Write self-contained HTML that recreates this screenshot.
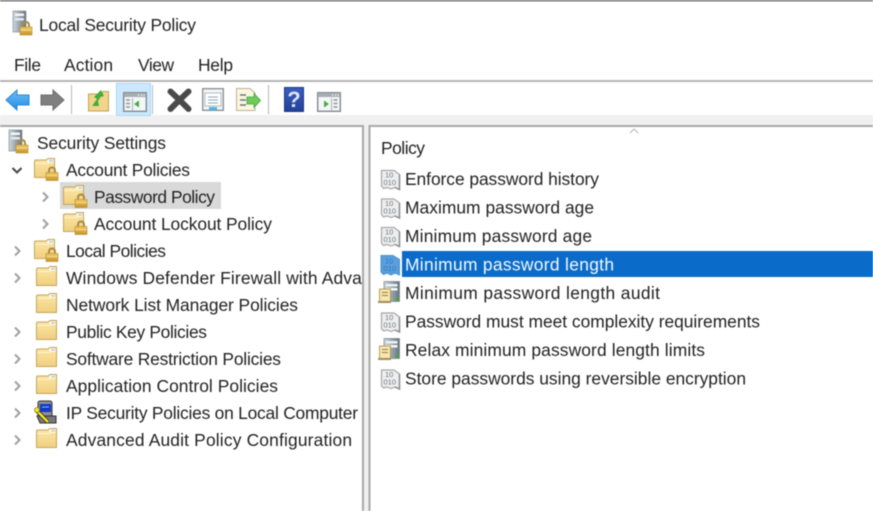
<!DOCTYPE html>
<html lang="en"><head><meta charset="utf-8"><title>Local Security Policy</title>
<style>
html,body{margin:0;padding:0;width:873px;height:511px;overflow:hidden;background:#fff}
svg{display:block;filter:blur(.4px)}
text{font-family:"Liberation Sans",sans-serif;font-size:17.4px;fill:#222}
</style></head><body>
<svg xmlns="http://www.w3.org/2000/svg" width="873" height="511" viewBox="0 0 873 511">
<defs>
<linearGradient id="fg" x1="0" y1="0" x2="0" y2="1"><stop offset="0" stop-color="#fbe7a8"/><stop offset="1" stop-color="#f1cf7e"/></linearGradient>
<linearGradient id="lg" x1="0" y1="0" x2="0" y2="1"><stop offset="0" stop-color="#f0cb62"/><stop offset="1" stop-color="#c8922a"/></linearGradient>
<linearGradient id="tg" x1="0" y1="0" x2="1" y2="0"><stop offset="0" stop-color="#cdd6dc"/><stop offset="1" stop-color="#66747f"/></linearGradient>
<linearGradient id="bg" x1="0" y1="0" x2="0" y2="1"><stop offset="0" stop-color="#6fbdf5"/><stop offset="1" stop-color="#1f8fe6"/></linearGradient>
<linearGradient id="hg" x1="0" y1="0" x2="0" y2="1"><stop offset="0" stop-color="#3a5fc0"/><stop offset="1" stop-color="#22409a"/></linearGradient>
<clipPath id="lp"><rect x="0" y="127" width="362" height="384"/></clipPath>

<g id="folder">
<path d="M.5 3.500Q.5 2 2 2H12L14 .5H20.500V19.500H.5Z" fill="url(#fg)" stroke="#c4a35c"/>
<rect x="13.500" y="1.500" width="6" height="3" fill="#fff"/>
<rect x="15" y="2.200" width="4" height="1.400" fill="#a9c8de"/>
<path d="M1 5.500H13.500L15 4.500H20" fill="none" stroke="#fff3cc"/>
</g>
<g id="lock">
<path d="M3 6.500V4Q3 .5 6 .5T9 4V6.500" fill="none" stroke="#a98a45" stroke-width="2"/>
<rect x="0" y="5.500" width="12" height="8" fill="url(#lg)" stroke="#b88a2c" stroke-width=".6"/>
<rect x=".5" y="8" width="11" height="1.200" fill="#f5db88"/>
</g>
<g id="lf"><use href="#folder"/><use href="#lock" x="12" y="9"/></g>
<g id="ch"><path d="M0 0L4.500 4.500 0 9" fill="none" stroke="#a0a0a0" stroke-width="2"/></g>
<g id="tower">
<rect x="0" y="0" width="13" height="21" fill="url(#tg)" stroke="#7c8790" stroke-width=".6"/>
<rect x="2" y="2.500" width="9" height="2.500" fill="#f4f6f7"/>
<rect x="2" y="7" width="9" height="2.500" fill="#e3e8ec"/>
</g>
<g id="bin">
<path d="M.5 1.500H13L18.500 5.500V20.500L14 18.500 10 20 6 18.500 2.500 19.500 .5 17Z" fill="#eeeeee" stroke="#a6a6a6" stroke-width="1.200"/>
<path d="M14 18.500 18.500 20.500V5.500" fill="none" stroke="#8a8a8a" stroke-width="1.400"/>
<text x="4" y="8.500" style="font-size:7.500px;fill:#6f7882">10</text>
<text x="2.500" y="16" style="font-size:7.500px;fill:#6f7882">010</text>
</g>
<g id="srv">
<rect x="6" y="0.500" width="15.500" height="20" fill="url(#tg)" stroke="#66737c" stroke-width=".6"/>
<rect x="8" y="3" width="11.500" height="2.500" fill="#eef2f4"/>
<rect x="8" y="7" width="11.500" height="2.500" fill="#f6f8f9"/>
<circle cx="19.500" cy="18" r="1.600" fill="#40b030"/>
<rect x="1.500" y="8" width="11" height="12.500" fill="#f8e6ab" stroke="#a48a4e" stroke-width=".8"/>
<path d="M4 11.500H10M4 14.500H10" stroke="#8d7a4c"/>
<rect x="0" y="20" width="13" height="2" fill="#a38c58"/>
</g>
<g id="win">
<rect x=".7" y=".7" width="22.600" height="18.600" fill="#f5f6f6" stroke="#7f8890" stroke-width="1.400"/>
<rect x="1" y="1" width="22" height="4" fill="#a6adb3"/>
<path d="M15 3H16M18 3H19M20.500 3H21.500" stroke="#fff" stroke-width="1.400"/>
</g>
</defs>

<rect x="0" y="0" width="873" height="1.500" fill="#777"/>

<!-- title -->
<use href="#tower" x="13" y="11"/>
<use href="#lock" x="20" y="21.500"/>
<text x="39" y="31" textLength="157">Local Security Policy</text>

<!-- menu -->
<text x="14" y="71" textLength="27">File</text>
<text x="64" y="71" textLength="49">Action</text>
<text x="138" y="71" textLength="36">View</text>
<text x="198" y="71" textLength="35">Help</text>
<rect x="0" y="80" width="873" height="2" fill="#b4b4b4"/>

<!-- toolbar -->
<rect x="0" y="115" width="873" height="12" fill="#f0f0f0"/>
<rect x="116.500" y="83.500" width="34" height="32" fill="#cce8ff" stroke="#a9d8fb"/>
<path d="M71.500 85V114M152.500 85V114M268.500 85V114" stroke="#b5b5b5"/>
<path d="M6 100L17 90V95H29V105H17V110Z" fill="url(#bg)" stroke="#2b86d0"/>
<path d="M64 100L53 90V95H41V105H53V110Z" fill="#808080" stroke="#6e6e6e"/>
<path d="M88.500 94H100L103 91.500H108.500V111H88.500Z" fill="#f2d58a" stroke="#c2a25c"/>
<path d="M92 106L97 99 94 97 101 90 104 96 100.500 97 98 101 99 106Z" fill="#43ac3c"/>
<g transform="translate(123,92)"><use href="#win"/>
<path d="M3 8H7M3 11.500H7M3 15H7" stroke="#8d959c" stroke-width="1.600"/>
<path d="M16 8.500V15.500L11 12Z" fill="#3fb04a"/>
<path d="M9.500 6V19" stroke="#aab0b5"/>
</g>
<path d="M170.500 91.500L179.500 100M188.500 91.500L179.500 100M170.500 109L179.500 100M188.500 109L179.500 100" stroke="#4a4a4a" stroke-width="6" stroke-linecap="round"/>
<g>
<rect x="202.700" y="88.700" width="20.600" height="21.600" fill="#f3f5f6" stroke="#8a9298" stroke-width="1.400"/>
<rect x="205" y="93" width="16" height="13" fill="#fff" stroke="#b5bbc0"/>
<path d="M208 97H218M208 100H218M208 103H218" stroke="#8ea5ba"/>
<rect x="209" y="107" width="8" height="3" fill="#56b2e8"/>
</g>
<g>
<path d="M236.500 88.500H250L255 93V110.500H236.500Z" fill="#fbf7df" stroke="#b7b19a"/>
<path d="M240 95H246M240 100H246M240 105H246" stroke="#6a7480" stroke-width="1.400"/>
<path d="M247 97H254V93.500L260.500 100.500 254 107.500V104H247Z" fill="#6fcb58" stroke="#3ea53a" stroke-width=".8"/>
</g>
<rect x="284.500" y="87.500" width="19" height="24" fill="url(#hg)" stroke="#1d347f"/>
<text x="294" y="107" text-anchor="middle" style="font-size:22px;font-weight:bold;fill:#dfe5f5">?</text>
<g transform="translate(317,92)"><use href="#win"/>
<path d="M7 8.500V15.500L12 12Z" fill="#3fb04a"/>
<path d="M14.500 6V19" stroke="#aab0b5"/>
<path d="M16.500 8H20.500M16.500 11.500H20.500M16.500 15H20.500" stroke="#8d959c" stroke-width="1.600"/>
</g>

<!-- pane frame -->
<rect x="0" y="125" width="362" height="2" fill="#a8a8a8"/>
<rect x="362" y="125" width="2" height="386" fill="#a8a8a8"/>
<rect x="364" y="127" width="4.500" height="384" fill="#f0f0f0"/>
<rect x="368.500" y="125" width="2" height="386" fill="#a8a8a8"/>
<rect x="370" y="125" width="503" height="2" fill="#a8a8a8"/>
<rect x="0" y="127" width="362" height="384" fill="#fff"/>
<rect x="370.500" y="127" width="502.500" height="384" fill="#fff"/>

<!-- tree -->
<use href="#tower" x="9" y="130"/>
<use href="#lock" x="16" y="139.500"/>
<text x="37" y="149" textLength="129">Security Settings</text>

<rect x="60" y="182" width="161" height="27" fill="#d9d9d9"/>

<path d="M12.500 168L17 172.500 21.500 168" fill="none" stroke="#444" stroke-width="2"/>
<use href="#lf" x="34" y="158"/>
<text x="66" y="176" textLength="124">Account Policies</text>

<use href="#ch" x="43" y="192.500"/>
<use href="#lf" x="63" y="185"/>
<text x="94" y="203" textLength="121">Password Policy</text>

<use href="#ch" x="43" y="219.500"/>
<use href="#lf" x="63" y="212"/>
<text x="94" y="230" textLength="178">Account Lockout Policy</text>

<use href="#ch" x="15" y="246.500"/>
<use href="#lf" x="34" y="239"/>
<text x="66" y="257" textLength="100">Local Policies</text>

<use href="#ch" x="15" y="273.500"/>
<use href="#folder" x="36" y="266"/>
<g clip-path="url(#lp)"><text x="66" y="284" textLength="403">Windows Defender Firewall with Advanced Security</text></g>

<use href="#folder" x="36" y="293"/>
<text x="66" y="311" textLength="232">Network List Manager Policies</text>

<use href="#ch" x="15" y="327.500"/>
<use href="#folder" x="36" y="320"/>
<text x="66" y="338" textLength="141">Public Key Policies</text>

<use href="#ch" x="15" y="354.500"/>
<use href="#folder" x="36" y="347"/>
<text x="66" y="365" textLength="215">Software Restriction Policies</text>

<use href="#ch" x="15" y="381.500"/>
<use href="#folder" x="36" y="374"/>
<text x="66" y="392" textLength="212">Application Control Policies</text>

<use href="#ch" x="15" y="408.500"/>
<g>
<rect x="38" y="401" width="14" height="16" rx="2" fill="#8d8f92" stroke="#333"/>
<rect x="40" y="404" width="11" height="8" fill="#1438c8"/>
<path d="M42 407H49" stroke="#5ed0f0"/>
<path d="M37 416H56V423H40Z" fill="#77797c" stroke="#333"/>
<path d="M36 410L48 422" stroke="#222" stroke-width="4"/>
<path d="M36 410L48 422" stroke="#f6e71c" stroke-width="2.500"/>
<circle cx="37" cy="410" r="2.500" fill="#f6e71c" stroke="#6b6310" stroke-width=".6"/>
</g>
<text x="66" y="419" textLength="292">IP Security Policies on Local Computer</text>

<use href="#ch" x="15" y="435.500"/>
<use href="#folder" x="36" y="428"/>
<text x="66" y="446" textLength="286">Advanced Audit Policy Configuration</text>

<!-- list -->
<path d="M630 133L634 129 638 133" fill="none" stroke="#b5b5b5"/>
<text x="381" y="154" textLength="44">Policy</text>

<use href="#bin" x="381" y="169"/>
<text x="405" y="185" textLength="194">Enforce password history</text>
<use href="#bin" x="381" y="197.500"/>
<text x="405" y="213.500" textLength="189">Maximum password age</text>
<use href="#bin" x="381" y="226"/>
<text x="405" y="242" textLength="187">Minimum password age</text>

<path d="M381 255.500H393L399.500 259.500V275L395 273 391 275 387 273 383.500 274.500 381 272Z" fill="#5a9fdc" stroke="#4a8fd0"/>
<text x="385" y="263.500" style="font-size:7.500px;fill:#2f78c0">10</text>
<text x="383.500" y="271" style="font-size:7.500px;fill:#2f78c0">010</text>
<rect x="402" y="251" width="471" height="26" fill="#0a6cc8"/>
<text x="405" y="270.500" textLength="209" style="fill:#f4f9ff">Minimum password length</text>

<use href="#srv" x="378" y="281"/>
<text x="405" y="299" textLength="255">Minimum password length audit</text>
<use href="#bin" x="381" y="311.500"/>
<text x="405" y="327.500" textLength="355">Password must meet complexity requirements</text>
<use href="#srv" x="378" y="338"/>
<text x="405" y="356" textLength="300">Relax minimum password length limits</text>
<use href="#bin" x="381" y="368.500"/>
<text x="405" y="384.500" textLength="341">Store passwords using reversible encryption</text>
</svg>
</body></html>
